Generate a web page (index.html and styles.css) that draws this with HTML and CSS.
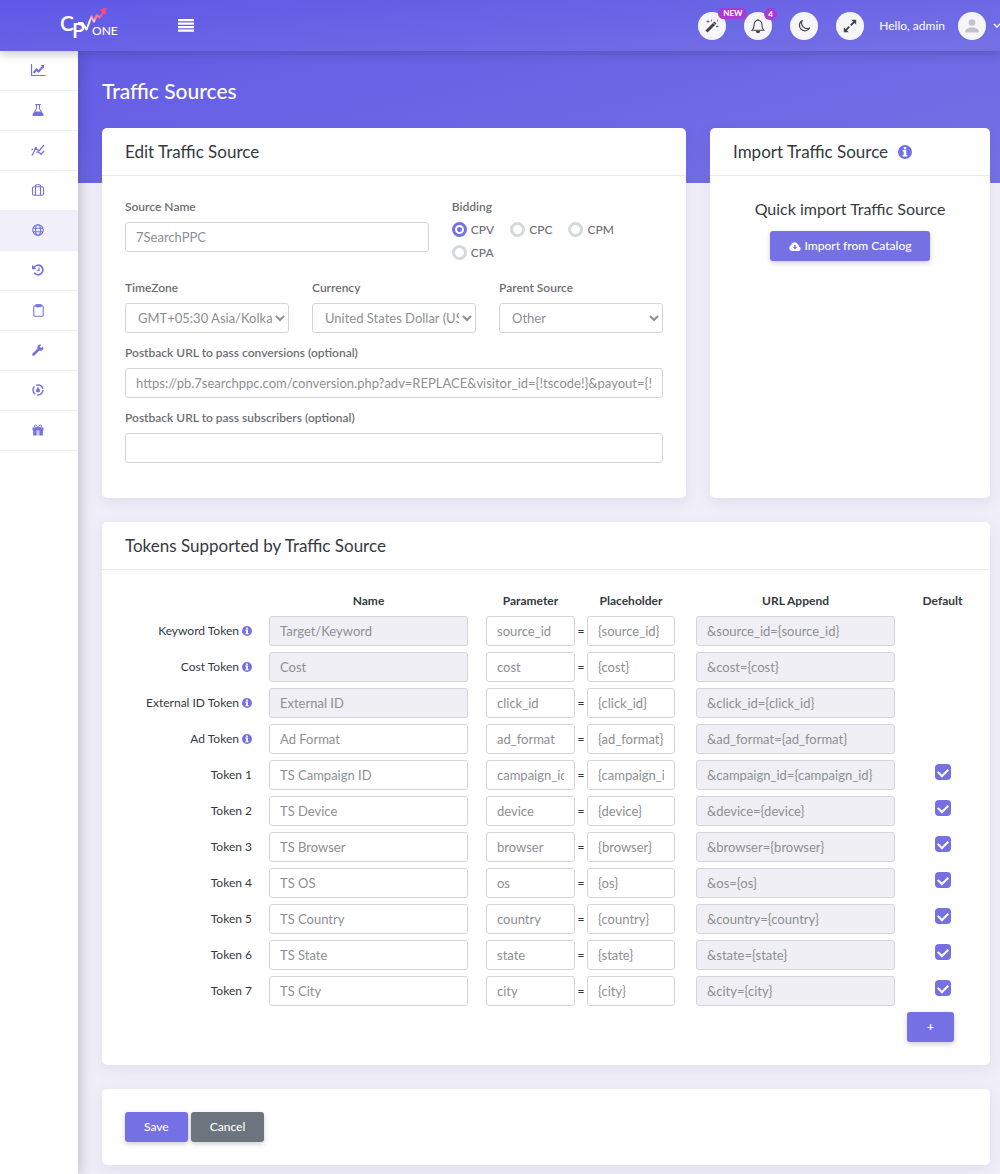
FILE: index.html
```html
<!DOCTYPE html>
<html lang="en">

<head>
    <meta charset="UTF-8">
    <meta name="viewport" content="width=device-width, initial-scale=1.0">
    <title>Traffic Sources</title>
    <link rel="stylesheet" href="styles.css">
</head>

<body>
    <!-- shared icons -->
    <svg class="sprite" aria-hidden="true">
        <symbol id="info" viewBox="0 0 14 14">
            <path fill-rule="evenodd" d="M7 0a7 7 0 1 1 0 14A7 7 0 0 1 7 0zM5.800 2v2.200h2.400V2zM4.700 5v1.500h1V10h-1v1.500h4.600V10h-1V5z" />
        </symbol>
    </svg>

    <header class="topbar">
        <a class="logo" href="#" aria-label="CPV One">
            <svg width="60" height="34" viewBox="0 0 60 34">
                <defs>
                    <linearGradient id="arrow" x1="0" y1="1" x2="1" y2="0">
                        <stop offset="0" stop-color="#fff" />
                        <stop offset=".45" stop-color="#fff" />
                        <stop offset=".6" stop-color="#ff9aa8" />
                        <stop offset=".9" stop-color="#ff4a78" />
                    </linearGradient>
                </defs>
                <text class="logo-cp" x="0" y="24">C<tspan dx="-2" dy="7">P</tspan></text>
                <path d="M18 16h4.500l4 6.500 5-13 2.500 5 3-6.500 2.500 2.500 4.500-6" fill="none" stroke="url(#arrow)" stroke-width="2" stroke-linejoin="round" />
                <path d="M40.500 3l5.500-2-1 6z" fill="#ff4a78" stroke="#ff4a78" />
                <text class="logo-one" x="32" y="28">ONE</text>
            </svg>
        </a>
        <button class="menu-btn" aria-label="Toggle menu">
            <svg width="16" height="13" viewBox="0 0 16 13"><path d="M0 1.200h16M0 4.700h16M0 8.200h16M0 11.700h16" stroke="#fff" stroke-width="2.200" /></svg>
        </button>

        <div class="tools">
            <button class="round" aria-label="What's new">
                <svg width="14" height="14" viewBox="0 0 14 14"><path d="M1.500 12.500L10.500 3.500" stroke="#3d4347" stroke-width="3" /><path d="M8.500 4l1.700 1.700" stroke="#fff" stroke-width=".8" /><path d="M3 1v3M1.500 2.500h3M6.500 .5v2M12.500 .5v2M12 6.500v2M11 7.500h2.500" stroke="#5c6266" stroke-width=".8" /></svg>
                <span class="badge">NEW</span>
            </button>
            <button class="round" aria-label="Notifications">
                <svg width="14" height="16" viewBox="0 0 14 16" fill="none" stroke="#3d4347" stroke-width="1.100"><path d="M1 12.300c1.800-1.500 2.100-3 2.100-5.500C3.100 4.200 4.700 2.300 7 2.300s3.900 1.900 3.900 4.500c0 2.500.3 4 2.100 5.500zM7 2.300V.8" /><path d="M5.500 13.500c.2 1.600 2.800 1.600 3 0z" fill="#3d4347" /></svg>
                <span class="badge count">4</span>
            </button>
            <button class="round" aria-label="Dark mode">
                <svg width="14" height="14" viewBox="0 0 14 14"><path d="M5.200 1.500A5.500 5.500 0 1 0 12.700 9 5.600 5.600 0 0 1 5.200 1.500z" fill="none" stroke="#3d4347" stroke-width="1.200" stroke-linejoin="round" /></svg>
            </button>
            <button class="round" aria-label="Full screen">
                <svg width="14" height="14" viewBox="0 0 14 14" fill="#3d4347"><path d="M8.200 .8h5V5.800zM.8 8.200v5h5z" /><path d="M2.500 11.500l3.800-3.800M7.700 6.300l3.800-3.800" stroke="#3d4347" stroke-width="1.800" /></svg>
            </button>
            <span class="hello">Hello, admin</span>
            <button class="user" aria-label="User menu">
                <span class="round">
                    <svg width="16" height="14" viewBox="0 0 16 14" fill="#c3c3c6"><circle cx="8" cy="3.500" r="3.300" /><path d="M1 13.500c0-3 2.500-5 7-5s7 2 7 5z" /></svg>
                </span>
                <svg width="7" height="8" viewBox="0 0 7 8"><path d="M1 2l3 3 3-3" fill="none" stroke="#fff" stroke-width="1.500" /></svg>
            </button>
        </div>
    </header>

    <div class="layout">
        <nav class="sidebar">
            <a href="#" aria-label="Dashboard"><svg width="16" height="14" viewBox="0 0 16 14" fill="none" stroke="currentColor"><path d="M1.500 1v11.500H15.500" stroke-width="1.200" /><path d="M3.500 10l3-3.500 2 2L13 3.500" stroke-width="2" /><path d="M10.500 2H14v3.500z" fill="currentColor" stroke="none" /></svg></a>
            <a href="#" aria-label="Experiments"><svg width="12" height="12" viewBox="0 0 12 12" fill="currentColor"><path d="M3.300 0h5.400v1.200H8v3.300l3.500 6c.4.800 0 1.500-.9 1.500H1.400c-.9 0-1.300-.7-.9-1.500L4 4.500V1.200h-.7zM5 1.200v3.600L3.300 7.600h5.400L7 4.800V1.200z" fill-rule="evenodd" /></svg></a>
            <a href="#" aria-label="Trends"><svg width="14" height="12" viewBox="0 0 14 12" fill="none" stroke="currentColor" stroke-width="1.300"><path d="M1 11.500L4.500 5l4 1.500L13 .8M.5 5.800l1.500-.6M5.500 8.500L7 7.500l3 2.800L13.200 7" /><circle cx="4.800" cy="4.500" r=".8" fill="currentColor" /></svg></a>
            <a href="#" aria-label="Campaigns"><svg width="14" height="12" viewBox="0 0 14 12" fill="none" stroke="currentColor" stroke-width="1.100"><rect x="1.500" y="2.800" width="11" height="8.500" rx="1.500" /><path d="M4.500 11.300V1.700c0-.6.400-1 1-1h3c.6 0 1 .4 1 1v9.600" /></svg></a>
            <a class="active" href="#" aria-label="Traffic sources"><svg width="12" height="12" viewBox="0 0 12 12" fill="none" stroke="currentColor" stroke-width="1.100"><circle cx="6" cy="6" r="5.300" /><ellipse cx="6" cy="6" rx="2.500" ry="5.300" /><path d="M1 4.300h10M1 7.700h10" /></svg></a>
            <a href="#" aria-label="History"><svg width="12" height="12" viewBox="0 0 12 12" fill="none" stroke="currentColor"><path d="M2 3.500a4.800 4.800 0 1 1 .2 5.300" stroke-width="1.700" /><path d="M0 .8v4.400h4.400z" fill="currentColor" stroke="none" /><path d="M7 3.500v3H4.800" stroke-width="1.200" /></svg></a>
            <a href="#" aria-label="Reports"><svg width="11" height="13" viewBox="0 0 11 13" fill="none" stroke="currentColor" stroke-width="1.100"><rect x=".8" y="1.800" width="9.400" height="10.500" rx="1" /><rect x="3" y=".7" width="5" height="2" fill="currentColor" /></svg></a>
            <a href="#" aria-label="Tools"><svg width="12" height="12" viewBox="0 0 12 12"><path d="M1.500 10.500L7 5" stroke="currentColor" stroke-width="2.600" stroke-linecap="round" /><path d="M10.800 2.500L9 4 7.700 2.800 9.300.8C7.500 0 5.300 1.300 5.300 3.500c0 2 1.500 3.300 3.200 3.300 2.300 0 3.600-2.300 2.300-4.300z" fill="currentColor" /></svg></a>
            <a href="#" aria-label="Conversions"><svg width="12" height="12" viewBox="0 0 12 12" fill="none" stroke="currentColor" stroke-width="1.500"><circle cx="6" cy="6" r="5" stroke-dasharray="8.500 2" /><path d="M6 2.500L3.800 6.500C3.500 9 8.500 9 8.200 6.500z" fill="currentColor" stroke="none" /></svg></a>
            <a href="#" aria-label="Rewards"><svg width="12" height="12" viewBox="0 0 12 12" fill="currentColor"><path d="M.5 3.500h11v3H.5zM1.200 6h3.500v5.500H1.200zM7.300 6h3.500v5.500H7.300z" /><path d="M5.200 7h1.600v4.500H5.200z" fill-opacity=".5" /><path d="M5.700 3.400C5 1 2.500.3 2.500 2s2 1.500 3.200 1.500zM6.300 3.400C7 1 9.500.3 9.500 2s-2 1.500-3.200 1.500z" fill="none" stroke="currentColor" /></svg></a>
        </nav>

        <main class="content">
            <h1>Traffic Sources</h1>

            <div class="top-cards">
                <section class="card">
                    <h2>Edit Traffic Source</h2>
                    <form class="card-body source-form">
                        <div class="row name-row">
                            <div class="field">
                                <label for="source_name">Source Name</label>
                                <input class="form-control" type="text" id="source_name" value="7SearchPPC">
                            </div>
                            <fieldset class="bidding">
                                <legend>Bidding</legend>
                                <div class="radios">
                                    <label><input type="radio" name="bidding" checked>CPV</label>
                                    <label><input type="radio" name="bidding">CPC</label>
                                    <label><input type="radio" name="bidding">CPM</label>
                                    <label><input type="radio" name="bidding">CPA</label>
                                </div>
                            </fieldset>
                        </div>
                        <div class="row">
                            <div class="field">
                                <label for="timezone">TimeZone</label>
                                <select class="form-control" id="timezone"><option>GMT+05:30 Asia/Kolkata</option></select>
                            </div>
                            <div class="field">
                                <label for="currency">Currency</label>
                                <select class="form-control" id="currency"><option>United States Dollar (USD)</option></select>
                            </div>
                            <div class="field">
                                <label for="parent">Parent Source</label>
                                <select class="form-control" id="parent"><option>Other</option></select>
                            </div>
                        </div>
                        <div class="field">
                            <label for="pb_conv">Postback URL to pass conversions (optional)</label>
                            <input class="form-control" type="text" id="pb_conv" value="https://pb.7searchppc.com/conversion.php?adv=REPLACE&amp;visitor_id={!tscode!}&amp;payout={!revenue!}">
                        </div>
                        <div class="field">
                            <label for="pb_sub">Postback URL to pass subscribers (optional)</label>
                            <input class="form-control" type="text" id="pb_sub">
                        </div>
                    </form>
                </section>

                <section class="card">
                    <h2>Import Traffic Source <svg class="info info-lg"><use href="#info" /></svg></h2>
                    <div class="card-body import">
                        <h3>Quick import Traffic Source</h3>
                        <button class="btn">
                            <svg width="12" height="9" viewBox="0 0 12 9"><path fill="#fff" fill-rule="evenodd" d="M3 9a3 3 0 0 1-1-5.700A3.500 3.500 0 0 1 8.700 2.300 2 2 0 0 1 10 4.500 2.300 2.300 0 0 1 9.700 9zM5.300 3v2H3.800L6 7.500 8.200 5H6.700V3z" /></svg>
                            Import from Catalog
                        </button>
                    </div>
                </section>
            </div>

            <section class="card">
                <h2>Tokens Supported by Traffic Source</h2>
                <div class="tokens">
                    <table>
                        <colgroup>
                            <col class="c-label"><col class="c-name"><col class="c-param"><col class="c-eq"><col class="c-place"><col class="c-url"><col class="c-def">
                        </colgroup>
                        <thead>
                            <tr>
                                <td></td>
                                <th class="name">Name</th>
                                <th>Parameter</th>
                                <td></td>
                                <th class="place">Placeholder</th>
                                <th>URL Append</th>
                                <th>Default</th>
                            </tr>
                        </thead>
                        <tbody>
                            <tr>
                                <th class="label"><label for="t1">Keyword Token <svg class="info"><use href="#info" /></svg></label></th>
                                <td class="name"><input class="form-control" id="t1" value="Target/Keyword" readonly></td>
                                <td><input class="form-control" aria-label="Parameter" value="source_id"></td>
                                <td class="eq">=</td>
                                <td class="place"><input class="form-control" aria-label="Placeholder" value="{source_id}"></td>
                                <td><input class="form-control" aria-label="URL append" value="&amp;source_id={source_id}" readonly></td>
                                <td></td>
                            </tr>
                            <tr>
                                <th class="label"><label for="t2">Cost Token <svg class="info"><use href="#info" /></svg></label></th>
                                <td class="name"><input class="form-control" id="t2" value="Cost" readonly></td>
                                <td><input class="form-control" aria-label="Parameter" value="cost"></td>
                                <td class="eq">=</td>
                                <td class="place"><input class="form-control" aria-label="Placeholder" value="{cost}"></td>
                                <td><input class="form-control" aria-label="URL append" value="&amp;cost={cost}" readonly></td>
                                <td></td>
                            </tr>
                            <tr>
                                <th class="label"><label for="t3">External ID Token <svg class="info"><use href="#info" /></svg></label></th>
                                <td class="name"><input class="form-control" id="t3" value="External ID" readonly></td>
                                <td><input class="form-control" aria-label="Parameter" value="click_id"></td>
                                <td class="eq">=</td>
                                <td class="place"><input class="form-control" aria-label="Placeholder" value="{click_id}"></td>
                                <td><input class="form-control" aria-label="URL append" value="&amp;click_id={click_id}" readonly></td>
                                <td></td>
                            </tr>
                            <tr>
                                <th class="label"><label for="t4">Ad Token <svg class="info"><use href="#info" /></svg></label></th>
                                <td class="name"><input class="form-control" id="t4" value="Ad Format"></td>
                                <td><input class="form-control" aria-label="Parameter" value="ad_format"></td>
                                <td class="eq">=</td>
                                <td class="place"><input class="form-control" aria-label="Placeholder" value="{ad_format}"></td>
                                <td><input class="form-control" aria-label="URL append" value="&amp;ad_format={ad_format}" readonly></td>
                                <td></td>
                            </tr>
                            <tr>
                                <th class="label"><label for="t5">Token 1</label></th>
                                <td class="name"><input class="form-control" id="t5" value="TS Campaign ID"></td>
                                <td><input class="form-control" aria-label="Parameter" value="campaign_id"></td>
                                <td class="eq">=</td>
                                <td class="place"><input class="form-control" aria-label="Placeholder" value="{campaign_id}"></td>
                                <td><input class="form-control" aria-label="URL append" value="&amp;campaign_id={campaign_id}" readonly></td>
                                <td class="def"><input type="checkbox" aria-label="Default" checked></td>
                            </tr>
                            <tr>
                                <th class="label"><label for="t6">Token 2</label></th>
                                <td class="name"><input class="form-control" id="t6" value="TS Device"></td>
                                <td><input class="form-control" aria-label="Parameter" value="device"></td>
                                <td class="eq">=</td>
                                <td class="place"><input class="form-control" aria-label="Placeholder" value="{device}"></td>
                                <td><input class="form-control" aria-label="URL append" value="&amp;device={device}" readonly></td>
                                <td class="def"><input type="checkbox" aria-label="Default" checked></td>
                            </tr>
                            <tr>
                                <th class="label"><label for="t7">Token 3</label></th>
                                <td class="name"><input class="form-control" id="t7" value="TS Browser"></td>
                                <td><input class="form-control" aria-label="Parameter" value="browser"></td>
                                <td class="eq">=</td>
                                <td class="place"><input class="form-control" aria-label="Placeholder" value="{browser}"></td>
                                <td><input class="form-control" aria-label="URL append" value="&amp;browser={browser}" readonly></td>
                                <td class="def"><input type="checkbox" aria-label="Default" checked></td>
                            </tr>
                            <tr>
                                <th class="label"><label for="t8">Token 4</label></th>
                                <td class="name"><input class="form-control" id="t8" value="TS OS"></td>
                                <td><input class="form-control" aria-label="Parameter" value="os"></td>
                                <td class="eq">=</td>
                                <td class="place"><input class="form-control" aria-label="Placeholder" value="{os}"></td>
                                <td><input class="form-control" aria-label="URL append" value="&amp;os={os}" readonly></td>
                                <td class="def"><input type="checkbox" aria-label="Default" checked></td>
                            </tr>
                            <tr>
                                <th class="label"><label for="t9">Token 5</label></th>
                                <td class="name"><input class="form-control" id="t9" value="TS Country"></td>
                                <td><input class="form-control" aria-label="Parameter" value="country"></td>
                                <td class="eq">=</td>
                                <td class="place"><input class="form-control" aria-label="Placeholder" value="{country}"></td>
                                <td><input class="form-control" aria-label="URL append" value="&amp;country={country}" readonly></td>
                                <td class="def"><input type="checkbox" aria-label="Default" checked></td>
                            </tr>
                            <tr>
                                <th class="label"><label for="t10">Token 6</label></th>
                                <td class="name"><input class="form-control" id="t10" value="TS State"></td>
                                <td><input class="form-control" aria-label="Parameter" value="state"></td>
                                <td class="eq">=</td>
                                <td class="place"><input class="form-control" aria-label="Placeholder" value="{state}"></td>
                                <td><input class="form-control" aria-label="URL append" value="&amp;state={state}" readonly></td>
                                <td class="def"><input type="checkbox" aria-label="Default" checked></td>
                            </tr>
                            <tr>
                                <th class="label"><label for="t11">Token 7</label></th>
                                <td class="name"><input class="form-control" id="t11" value="TS City"></td>
                                <td><input class="form-control" aria-label="Parameter" value="city"></td>
                                <td class="eq">=</td>
                                <td class="place"><input class="form-control" aria-label="Placeholder" value="{city}"></td>
                                <td><input class="form-control" aria-label="URL append" value="&amp;city={city}" readonly></td>
                                <td class="def"><input type="checkbox" aria-label="Default" checked></td>
                            </tr>
                        </tbody>
                    </table>
                    <div class="add-row">
                        <button class="btn" aria-label="Add token">+</button>
                    </div>
                </div>
            </section>

            <section class="card actions">
                <button class="btn">Save</button>
                <button class="btn btn-secondary">Cancel</button>
            </section>
        </main>
    </div>
</body>

</html>
```
FILE: styles.css
```css
* {
    padding: 0;
    margin: 0;
    box-sizing: border-box;
}

:root {
    --primary: #7571e4;
    --bg: #f0eef8;
    --border: #d3d6d9;
    --text: #343a40;
    --label: #6c6f73;
    --muted: #8d8f92;
}

body {
    min-height: 100vh;
    display: flex;
    flex-direction: column;
    background: var(--bg);
    color: var(--text);
    font-family: Lato, "Open Sans", sans-serif;
    font-size: 12px;
    line-height: 16px;
    overflow-x: hidden;
}

button,
input,
select {
    font: inherit;
}

button {
    border: 0;
    background: none;
    cursor: pointer;
}

svg {
    display: block;
    flex: none;
}

.sprite {
    width: 0;
    height: 0;
    position: absolute;
}

/* top bar */
.topbar {
    position: relative;
    z-index: 2;
    height: 51px;
    padding-left: 60px;
    display: flex;
    align-items: center;
    background: linear-gradient(175deg, #5f58e7, #7571e4);
    box-shadow: 0 2px 10px rgba(40, 40, 80, .3);
}

.logo {
    margin-top: -4px;
}

.logo text {
    fill: #fff;
}

.logo-cp {
    font-size: 21px;
    font-weight: 600;
}

.logo-one {
    font-size: 12px;
    font-weight: 500;
}

.menu-btn {
    margin-left: 58px;
}

.tools {
    margin-left: auto;
    display: flex;
    align-items: center;
    gap: 18px;
}

.round {
    position: relative;
    width: 28px;
    height: 28px;
    display: flex;
    align-items: center;
    justify-content: center;
    border-radius: 50%;
    background: #f6f6fa;
}

.badge {
    position: absolute;
    top: -4px;
    left: 20px;
    padding: 0 5px;
    border-radius: 6px;
    background: #a93bd2;
    color: #fff;
    font-size: 8px;
    font-weight: 700;
    line-height: 11px;
}

.count {
    padding: 0 4px;
    line-height: 12px;
}

.hello {
    margin-left: -3px;
    color: #fff;
}

.user {
    display: flex;
    align-items: center;
    gap: 7px;
    margin-left: -5px;
}

/* sidebar */
.layout {
    flex: 1;
    display: flex;
}

.sidebar {
    position: relative;
    z-index: 1;
    width: 78px;
    flex: none;
    background: #fff;
    box-shadow: 2px 0 12px rgba(40, 40, 80, .25);
}

.sidebar a {
    height: 40px;
    padding: 0 2px 1px 0;
    display: flex;
    align-items: center;
    justify-content: center;
    border-bottom: 1px solid #f0f0f3;
    color: var(--primary);
}

.sidebar a.active {
    background: #f1f0fa;
}

/* page */
.content {
    flex: 1;
    min-width: 0;
    padding: 26px 10px 9px 24px;
    display: flex;
    flex-direction: column;
    gap: 24px;
    background: linear-gradient(165deg, #645de6, #7571e4) top / 100% 132px no-repeat;
}

h1 {
    color: #fff;
    font-size: 21px;
    font-weight: 500;
    line-height: 27px;
}

.top-cards {
    display: grid;
    grid-template-columns: 584fr 280fr;
    gap: 24px;
}

.card {
    min-width: 0;
    background: #fff;
    border-radius: 5px;
    box-shadow: 0 4px 14px rgba(90, 85, 160, .1);
}

h2 {
    height: 48px;
    padding: 0 23px;
    display: flex;
    align-items: center;
    gap: 10px;
    border-bottom: 1px solid #ebebee;
    font-size: 17px;
    font-weight: 400;
}

.info {
    display: inline-block;
    width: 10px;
    height: 10px;
    vertical-align: -1px;
    fill: var(--primary);
}

.info-lg {
    width: 14px;
    height: 14px;
}

.card-body {
    padding: 23px 23px 35px;
}

.source-form {
    display: flex;
    flex-direction: column;
    gap: 12px;
}

.row {
    display: grid;
    grid-template-columns: repeat(3, 1fr);
    gap: 23px;
}

.name-row {
    grid-template-columns: 59fr 41fr;
}

.field {
    min-width: 0;
    display: flex;
    flex-direction: column;
    gap: 7px;
}

.field label,
.bidding legend {
    color: var(--label);
    font-weight: 600;
}

.form-control {
    display: block;
    width: 100%;
    height: 30px;
    padding: 0 10px;
    border: 1px solid var(--border);
    border-radius: 3px;
    background: #fff;
    color: var(--muted);
    font-size: 13px;
}

select.form-control {
    padding: 0 0 0 8px;
}

.form-control:read-only:not(select) {
    background: #f0eff5;
}

.bidding {
    border: 0;
}

.radios {
    display: flex;
    flex-wrap: wrap;
    column-gap: 16px;
    padding: 3px 0 4px;
    color: var(--label);
    font-weight: 500;
}

.radios label {
    height: 23px;
    display: flex;
    align-items: center;
    gap: 4px;
}

.radios input {
    appearance: none;
    width: 15px;
    height: 15px;
    border: 3px solid #d5d9dc;
    border-radius: 50%;
    background: #fff;
}

.radios input:checked {
    border-color: var(--primary);
    background: radial-gradient(circle, var(--primary) 2px, #fff 3px);
}

.import {
    display: flex;
    flex-direction: column;
    align-items: center;
    gap: 12px;
}

h3 {
    font-size: 16px;
    font-weight: 400;
    line-height: 20px;
}

.btn {
    height: 30px;
    padding: 0 19px;
    display: flex;
    align-items: center;
    gap: 4px;
    border-radius: 3px;
    background: var(--primary);
    color: #fff;
    font-weight: 500;
    box-shadow: 0 2px 5px rgba(60, 60, 90, .25);
}

.btn-secondary {
    background: #6c757d;
}

/* tokens table */
.tokens {
    padding: 16px 0 23px 23px;
}

table {
    width: 100%;
    table-layout: fixed;
    border-collapse: collapse;
}

.c-label { width: 144px; }
.c-name { width: 217px; }
.c-param { width: 89px; }
.c-eq { width: 12px; }
.c-place { width: 109px; }
.c-url { width: 199px; }
.c-def { width: 95px; }

thead th {
    height: 30px;
    font-weight: 700;
}

tbody th,
tbody td {
    padding-bottom: 6px;
}

.label {
    padding-right: 17px;
    text-align: right;
    font-weight: 400;
}

.name {
    padding-right: 18px;
}

.place {
    padding-right: 21px;
}

.eq {
    text-align: center;
    font-weight: 600;
}

.def {
    padding-top: 4px;
    vertical-align: top;
}

.def input {
    appearance: none;
    display: block;
    width: 16px;
    height: 16px;
    margin: 0 auto;
    border-radius: 4px;
    background: var(--primary);
}

.def input::after {
    content: "";
    display: block;
    width: 8px;
    height: 5px;
    margin: 4px auto 0;
    border-left: 2px solid #fff;
    border-bottom: 2px solid #fff;
    transform: rotate(-45deg);
}

.add-row {
    padding-right: 36px;
    display: flex;
    justify-content: flex-end;
}

.add-row .btn {
    padding: 0 20px;
    font-weight: 700;
}

.actions {
    padding: 23px;
    display: flex;
    gap: 3px;
}
```
